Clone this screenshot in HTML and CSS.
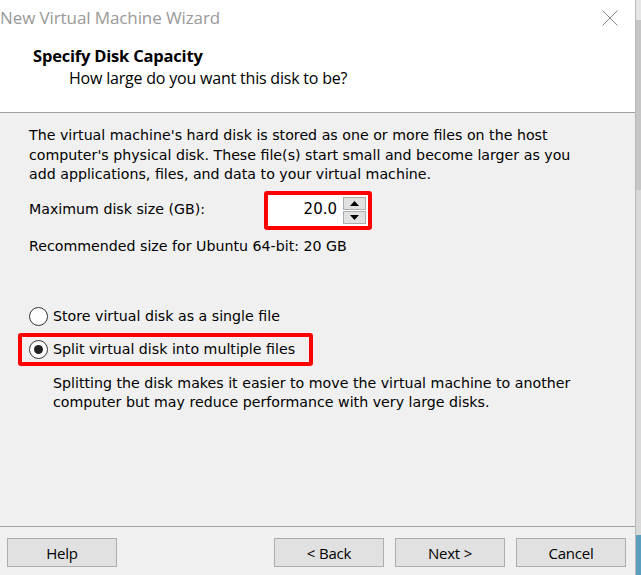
FILE: index.html
```html
<!DOCTYPE html>
<html>
<head>
<meta charset="utf-8">
<link rel="stylesheet" href="styles.css">
</head>
<body>
<div class="screen">
  <div class="window">
    <div class="header">
      <div class="titlebar">
        <span class="title">New Virtual Machine Wizard</span>
        <svg class="close" width="16" height="16" viewBox="0 0 16 16"><path d="M0.5 0.5 L15.5 15.5 M15.5 0.5 L0.5 15.5" stroke="#8a8a8a" stroke-width="1" fill="none"/></svg>
      </div>
      <div class="heading">Specify Disk Capacity</div>
      <div class="subheading">How large do you want this disk to be?</div>
    </div>
    <div class="content">
      <p class="intro">The virtual machine's hard disk is stored as one or more files on the host computer's physical disk. These file(s) start small and become larger as you add applications, files, and data to your virtual machine.</p>
      <div class="size-row">
        <span class="label">Maximum disk size (GB):</span>
        <div class="highlight spin-hl">
          <div class="spinner">
            <span class="value">20.0</span>
            <div class="spin-buttons">
              <div class="spin-btn"><svg width="9" height="5" viewBox="0 0 9 5"><path d="M0 5 L4.5 0 L9 5 Z" fill="#000"/></svg></div>
              <div class="spin-btn"><svg width="9" height="5" viewBox="0 0 9 5"><path d="M0 0 L4.5 5 L9 0 Z" fill="#000"/></svg></div>
            </div>
          </div>
        </div>
      </div>
      <div class="recommend">Recommended size for Ubuntu 64-bit: 20 GB</div>
      <div class="options">
        <div class="radio-row">
          <span class="radio"></span>
          <span class="radio-label">Store virtual disk as a single file</span>
        </div>
        <div class="highlight radio-hl">
          <div class="radio-row">
            <span class="radio checked"></span>
            <span class="radio-label">Split virtual disk into multiple files</span>
          </div>
        </div>
        <p class="desc">Splitting the disk makes it easier to move the virtual machine to another computer but may reduce performance with very large disks.</p>
      </div>
    </div>
    <div class="footer">
      <button class="btn">Help</button>
      <div class="nav">
        <button class="btn">&lt; Back</button>
        <button class="btn">Next &gt;</button>
        <button class="btn">Cancel</button>
      </div>
    </div>
  </div>
  <div class="edge"></div>
</div>
</body>
</html>
```

FILE: styles.css
```css
html, body {
  margin: 0;
  padding: 0;
}
body {
  width: 641px;
  height: 575px;
  overflow: hidden;
  background: #f0f0f0;
}
.screen {
  display: flex;
  width: 641px;
  height: 575px;
}
.window {
  width: 636px;
  display: flex;
  flex-direction: column;
  background: #f0f0f0;
}
.edge {
  width: 5px;
  border-left: 1px solid #b8b8b8;
  background: linear-gradient(to bottom, #e6e6e6 0, #e6e6e6 20px, #c6c6c6 20px, #c6c6c6 190px, #d9d9d9 190px, #d9d9d9 535px, #5b9fbf 535px);
  flex: none;
}
.header {
  height: 112px;
  background: #fff;
  border-bottom: 1px solid #a0a0a0;
  font-family: "Open Sans", "Noto Sans", sans-serif;
  color: #000;
}
.titlebar {
  display: flex;
  justify-content: space-between;
  align-items: flex-start;
  height: 36px;
}
.title {
  font-size: 17px;
  line-height: 20px;
  padding-top: 8px;
  color: #999;
  letter-spacing: -0.1px;
}
.close {
  margin-top: 10px;
  margin-right: 17px;
}
.heading {
  font-weight: bold;
  font-size: 16.5px;
  line-height: 20px;
  margin-left: 33px;
  margin-top: 10px;
  letter-spacing: -0.2px;
}
.subheading {
  font-size: 16px;
  line-height: 20px;
  margin-left: 69px;
  margin-top: 2px;
  letter-spacing: -0.2px;
}
.content {
  flex: 1;
  padding: 13px 0 0 29px;
  font-family: "DejaVu Sans", "Verdana", sans-serif;
  font-size: 14.2px;
  line-height: 19.5px;
  color: #000;
  border-bottom: 1px solid #a0a0a0;
}
.intro {
  margin: 0;
  width: 550px;
}
.size-row {
  display: flex;
  align-items: center;
  margin-top: 6px;
}
.label {
  width: 235px;
}
.highlight {
  border: 4px solid #f00;
  border-radius: 3px;
}
.spin-hl {
  width: 100px;
  height: 31px;
}
.spinner {
  display: flex;
  justify-content: flex-end;
  align-items: center;
  height: 31px;
  background: #fff;
}
.value {
  font-size: 15px;
  margin-right: 6px;
}
.spin-buttons {
  display: flex;
  flex-direction: column;
  gap: 1px;
  margin-right: 2px;
}
.spin-btn {
  width: 21px;
  height: 11px;
  background: #e1e1e1;
  border: 1px solid #adadad;
  display: flex;
  align-items: center;
  justify-content: center;
}
.recommend {
  margin-top: 7px;
}
.options {
  margin-top: 51px;
}
.radio-row {
  display: flex;
  align-items: center;
  gap: 5px;
}
.radio {
  width: 17px;
  height: 17px;
  border: 1px solid #333;
  border-radius: 50%;
  background: #fff;
  position: relative;
  flex: none;
}
.radio.checked::after {
  content: "";
  position: absolute;
  left: 4px;
  top: 4px;
  width: 9px;
  height: 9px;
  border-radius: 50%;
  background: #222;
}
.radio-hl {
  margin: 6px 0 0 -11px;
  width: 295px;
  padding: 3px 0 3px 7px;
  box-sizing: border-box;
  height: 33px;
}
.desc {
  margin: 8px 0 0 24px;
  width: 530px;
}
.footer {
  height: 48px;
  display: flex;
  justify-content: space-between;
  align-items: flex-start;
  padding: 11px 9px 0 7px;
  box-sizing: border-box;
}
.nav {
  display: flex;
  gap: 11px;
}
.btn {
  width: 110px;
  height: 29px;
  background: #e1e1e1;
  border: 1px solid #adadad;
  font-family: "Open Sans", "Noto Sans", sans-serif;
  font-size: 15px;
  color: #000;
  padding: 0;
  letter-spacing: -0.2px;
}
```
